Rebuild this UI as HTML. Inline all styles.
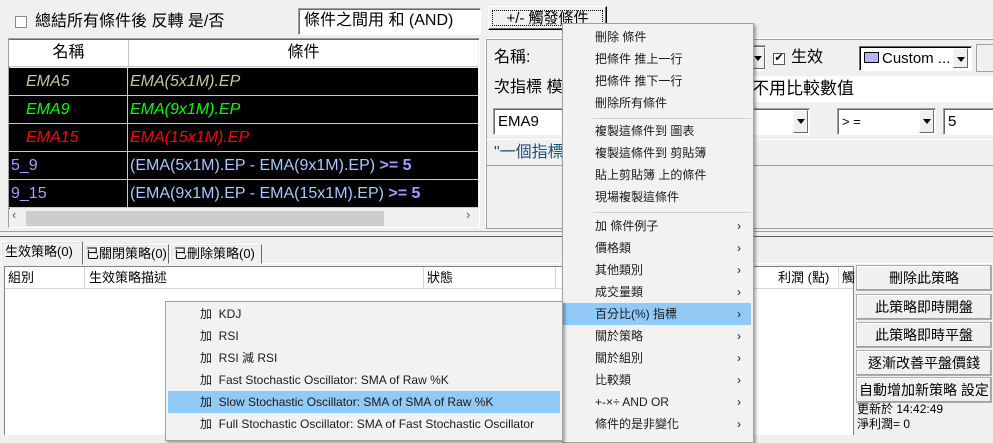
<!DOCTYPE html>
<html><head><meta charset="utf-8">
<style>
*{box-sizing:border-box;margin:0;padding:0}
body{width:993px;height:435px;overflow:hidden;background:#f0f0f0;position:relative;font-family:"Liberation Sans","Noto Sans CJK TC",sans-serif;font-size:15px;color:#000}
.a{position:absolute;white-space:nowrap}
.sunk{border:1px solid;border-color:#a0a0a0 #fff #fff #a0a0a0;box-shadow:inset 1px 1px 0 #696969}
.b2{position:absolute;background:#f0f0f0;border:1px solid #adadad;box-shadow:inset -1px -1px 0 #a0a0a0,inset 1px 1px 0 #fff;text-align:center;font-size:14px;line-height:24px}
.arr{position:absolute;width:15px;background:#f0f0f0;border:1px solid;border-color:#fff #696969 #696969 #fff}
.arr:after{content:"";position:absolute;left:3px;top:8px;border:4px solid transparent;border-top:5px solid #000;border-bottom:0}
.row{position:absolute;left:9px;width:469px;height:28px;background:#000;border-bottom:1px solid #c8c8c8;font-size:16px;line-height:27px}
.row .c1{position:absolute;left:0;width:119px;height:27px;border-right:1px solid #c8c8c8}
.row .c2{position:absolute;left:121px}
.menu{position:absolute;background:#f2f2f2;border:1px solid #a0a0a0;box-shadow:2px 2px 3px rgba(0,0,0,.35);font-size:12px;color:#1a1a1a}
.mi{position:absolute;height:22px;line-height:22px}
.sep{position:absolute;height:1px;background:#d0d0d0}
.chev{position:absolute;right:10px;font-size:12px}
.tab{position:absolute;border:1px solid;border-color:#fff #696969 transparent #fff;box-shadow:inset 1px 1px 0 #e3e3e3;font-size:13px;background:#f0f0f0}
</style></head><body>

<div class="a" style="left:15px;top:16px;width:12px;height:12px;background:#fff;border:1px solid #8a8a8a"></div>
<div class="a" style="left:35px;top:12px;line-height:20px;font-size:16px">總結所有條件後 反轉 是/否</div>
<div class="a sunk" style="left:298px;top:8px;width:183px;height:27px;background:#fff;padding-left:5px;line-height:24px;font-size:16px">條件之間用 和 (AND)</div>

<div class="a" style="left:488px;top:6px;width:119px;height:24px;background:#f0f0f0;border:1px solid;border-color:#fff #000 #000 #fff;box-shadow:inset -1px -1px 0 #696969"><div style="position:absolute;left:3px;top:3px;right:3px;bottom:3px;border:1px dotted #000;font-size:15px;line-height:16px;text-align:center">+/- 觸發條件</div></div>

<div class="a sunk" style="left:8px;top:38px;width:472px;height:190px;background:#f0f0f0"></div>
<div class="a" style="left:9px;top:40px;width:469px;height:27px;background:#fff;border-bottom:1px solid #c8c8c8"></div>
<div class="a" style="left:128px;top:40px;width:1px;height:27px;background:#c8c8c8"></div>
<div class="a" style="left:9px;top:41px;width:119px;text-align:center;line-height:24px;font-size:16px">名稱</div>
<div class="a" style="left:129px;top:41px;width:349px;text-align:center;line-height:24px;font-size:16px">條件</div>
<div class="row" style="top:68px;color:#c8c8a0;font-style:italic"><div class="c1" style="padding-left:17px">EMA5</div><div class="c2">EMA(5x1M).EP</div></div>
<div class="row" style="top:96px;color:#00ff00;font-style:italic"><div class="c1" style="padding-left:17px">EMA9</div><div class="c2">EMA(9x1M).EP</div></div>
<div class="row" style="top:124px;color:#ff0000;font-style:italic"><div class="c1" style="padding-left:17px">EMA15</div><div class="c2">EMA(15x1M).EP</div></div>
<div class="row" style="top:152px;color:#a8c8ff"><div class="c1" style="padding-left:2px;color:#a0a0ff">5_9</div><div class="c2">(EMA(5x1M).EP - EMA(9x1M).EP) <b style="color:#a0a0ff">&gt;= 5</b></div></div>
<div class="row" style="top:180px;color:#a8c8ff"><div class="c1" style="padding-left:2px;color:#a0a0ff">9_15</div><div class="c2">(EMA(9x1M).EP - EMA(15x1M).EP) <b style="color:#a0a0ff">&gt;= 5</b></div></div>
<div class="a" style="left:9px;top:209px;width:469px;height:18px;background:#f0f0f0"></div>
<div class="a" style="left:26px;top:211px;width:358px;height:15px;background:#cdcdcd"></div>
<div class="a" style="left:12px;top:207px;font-size:13px;color:#606060">‹</div>
<div class="a" style="left:466px;top:207px;font-size:13px;color:#606060">›</div>

<div class="a" style="left:485px;top:38px;width:510px;height:191px;border:1px solid;border-color:#fff #a0a0a0 #a0a0a0 #fff;box-shadow:inset 1px 1px 0 #a0a0a0"></div>
<div class="a" style="left:494px;top:47px;line-height:22px;font-size:16px">名稱:</div>
<div class="a sunk" style="left:740px;top:45px;width:26px;height:26px;background:#fff"></div>
<div class="arr" style="left:750px;top:47px;height:22px"></div>
<div class="a" style="left:773px;top:53px;width:12px;height:12px;background:#fff;border:1px solid #555;font-size:11px;line-height:9px;text-align:center">✔</div>
<div class="a" style="left:791px;top:47px;line-height:22px;font-size:16px">生效</div>
<div class="a" style="left:859px;top:46px;width:113px;height:25px;background:#fff;border:1px solid;border-color:#696969 #fff #fff #696969;box-shadow:inset 1px 1px 0 #000"></div>
<div class="a" style="left:864px;top:52px;width:15px;height:11px;background:#b4b4ff;border:1px solid #000"></div>
<div class="a" style="left:882px;top:48px;font-size:15px;line-height:22px">Custom ...</div>
<div class="arr" style="left:953px;top:48px;height:20px"></div>
<div class="a" style="left:976px;top:44px;width:20px;height:28px;border:1px solid #a0a0a0;border-right:0;background:#f0f0f0"></div>
<div class="a" style="left:494px;top:77px;line-height:22px;font-size:16px">次指標 模</div>
<div class="a" style="left:752px;top:76px;width:241px;height:26px;background:#fff;line-height:25px;font-size:17px">不用比較數值</div>
<div class="a sunk" style="left:493px;top:108px;width:180px;height:27px;background:#fff;padding-left:4px;line-height:25px;font-size:15px">EMA9</div>
<div class="a sunk" style="left:740px;top:108px;width:70px;height:27px;background:#fff"></div>
<div class="arr" style="left:793px;top:110px;height:23px"></div>
<div class="a sunk" style="left:837px;top:108px;width:99px;height:27px;background:#fff;padding-left:4px;line-height:25px;font-size:13px">&gt; =</div>
<div class="arr" style="left:919px;top:110px;height:23px"></div>
<div class="a sunk" style="left:943px;top:108px;width:52px;height:27px;background:#fff;padding-left:4px;line-height:25px">5</div>
<div class="a" style="left:486px;top:139px;width:507px;height:27px;border-top:1px solid #fff;border-bottom:1px solid #a0a0a0"></div>
<div class="a" style="left:494px;top:142px;line-height:22px;color:#1c4f80;font-size:16px">"一個指標</div>

<div class="a" style="left:0;top:231px;width:993px;height:6px;border-top:1px solid #a0a0a0;border-bottom:1px solid #606060;background:#f0f0f0"></div>

<div class="a" style="left:0;top:263px;width:993px;height:1px;background:#fff"></div>
<div class="tab" style="left:170px;top:244px;width:92px;height:20px;line-height:18px;padding-left:3px">已刪除策略(0)</div>
<div class="tab" style="left:83px;top:244px;width:86px;height:20px;line-height:18px;padding-left:2px">已關閉策略(0)</div>
<div class="tab" style="left:1px;top:241px;width:82px;height:24px;line-height:20px;padding-left:3px">生效策略(0)</div>

<div class="a" style="left:4px;top:266px;width:850px;height:169px;background:#fff;border:1px solid #828282;border-bottom:0"></div>
<div class="a" style="left:5px;top:267px;width:848px;height:22px;background:#fff;border-bottom:1px solid #d5d5d5;font-size:13px;line-height:21px">
<span class="a" style="left:3px">組別</span><span class="a" style="left:79px;top:0;width:1px;height:21px;background:#d5d5d5"></span>
<span class="a" style="left:84px">生效策略描述</span><span class="a" style="left:418px;top:0;width:1px;height:21px;background:#d5d5d5"></span>
<span class="a" style="left:422px">狀態</span><span class="a" style="left:550px;top:0;width:1px;height:21px;background:#d5d5d5"></span>
<span class="a" style="left:773px">利潤 (點)</span><span class="a" style="left:833px;top:0;width:1px;height:21px;background:#d5d5d5"></span>
<span class="a" style="left:837px">觸</span></div>

<div class="b2" style="left:856px;top:265px;width:136px;height:26px">刪除此策略</div>
<div class="b2" style="left:856px;top:294px;width:136px;height:26px">此策略即時開盤</div>
<div class="b2" style="left:856px;top:322px;width:136px;height:26px">此策略即時平盤</div>
<div class="b2" style="left:856px;top:350px;width:136px;height:26px">逐漸改善平盤價錢</div>
<div class="b2" style="left:856px;top:377px;width:136px;height:26px">自動增加新策略 設定</div>
<div class="a" style="left:857px;top:402px;font-size:12px;line-height:15px">更新於 14:42:49</div>
<div class="a" style="left:857px;top:417px;font-size:12px;line-height:15px">淨利潤= 0</div>

<div class="menu" style="left:562px;top:23px;width:192px;height:420px">
<div class="mi" style="left:32px;top:2px">刪除 條件</div>
<div class="mi" style="left:32px;top:24px">把條件 推上一行</div>
<div class="mi" style="left:32px;top:46px">把條件 推下一行</div>
<div class="mi" style="left:32px;top:68px">刪除所有條件</div>
<div class="sep" style="left:30px;top:94px;width:158px"></div>
<div class="mi" style="left:32px;top:96px">複製這條件到 圖表</div>
<div class="mi" style="left:32px;top:118px">複製這條件到 剪貼簿</div>
<div class="mi" style="left:32px;top:140px">貼上剪貼簿 上的條件</div>
<div class="mi" style="left:32px;top:162px">現場複製這條件</div>
<div class="sep" style="left:30px;top:188px;width:158px"></div>
<div class="mi" style="left:0;top:279px;width:188px;background:#91c9f7"></div>
<div class="mi" style="left:32px;top:191px;width:156px">加 條件例子<span class="chev">›</span></div>
<div class="mi" style="left:32px;top:213px;width:156px">價格類<span class="chev">›</span></div>
<div class="mi" style="left:32px;top:235px;width:156px">其他類別<span class="chev">›</span></div>
<div class="mi" style="left:32px;top:257px;width:156px">成交量類<span class="chev">›</span></div>
<div class="mi" style="left:32px;top:279px;width:156px">百分比(%) 指標<span class="chev">›</span></div>
<div class="mi" style="left:32px;top:301px;width:156px">關於策略<span class="chev">›</span></div>
<div class="mi" style="left:32px;top:323px;width:156px">關於組別<span class="chev">›</span></div>
<div class="mi" style="left:32px;top:345px;width:156px">比較類<span class="chev">›</span></div>
<div class="mi" style="left:32px;top:367px;width:156px">+-×÷ AND OR<span class="chev">›</span></div>
<div class="mi" style="left:32px;top:389px;width:156px">條件的是非變化<span class="chev">›</span></div>
</div>

<div class="menu" style="left:165px;top:301px;width:398px;height:140px">
<div class="mi" style="left:2px;top:89px;width:392px;background:#91c9f7"></div>
<div class="mi" style="left:34px;top:1px">加&nbsp; KDJ</div>
<div class="mi" style="left:34px;top:23px">加&nbsp; RSI</div>
<div class="mi" style="left:34px;top:45px">加&nbsp; RSI 減 RSI</div>
<div class="mi" style="left:34px;top:67px">加&nbsp; Fast Stochastic Oscillator: SMA of Raw %K</div>
<div class="mi" style="left:34px;top:89px">加&nbsp; Slow Stochastic Oscillator: SMA of SMA of Raw %K</div>
<div class="mi" style="left:34px;top:111px">加&nbsp; Full Stochastic Oscillator: SMA of Fast Stochastic Oscillator</div>
</div>

</body></html>
